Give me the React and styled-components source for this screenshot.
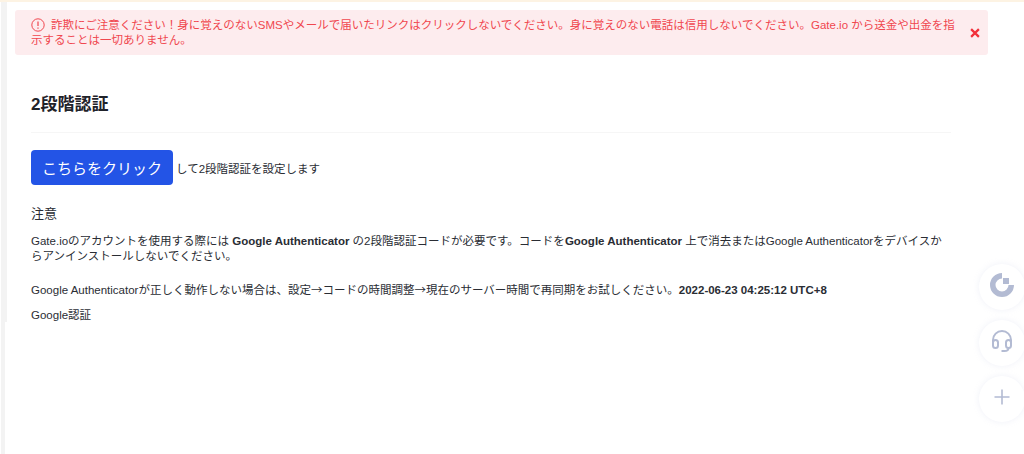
import React from "react";
import styled, { createGlobalStyle } from "styled-components";

const Global = createGlobalStyle`
  html, body { margin: 0; padding: 0; height: 100%; background: #fff; overflow: hidden; }
  body { font-family: "Liberation Sans", "Noto Sans CJK JP", sans-serif; color: #2a2d34; }
`;

const Page = styled.div`
  height: 454px;
  border-top: 2px solid #fdf3e3;
  box-sizing: border-box;
  position: relative;
`;
const Shell = styled.div`
  display: flex;
  height: 452px;
`;
const Rail = styled.div`
  width: 6px;
  margin-left: 1px;
  flex: none;
  display: flex;
  flex-direction: column;
`;
const RailTop = styled.div`
  height: 320px;
  background: #f3f3f3;
`;
const RailBottom = styled.div`
  flex: 1;
  width: 4px;
  background: #f3f3f3;
`;
const Main = styled.main`
  width: 981px;
  padding: 8px 0 0 8px;
  box-sizing: border-box;
`;
const Alert = styled.div`
  display: flex;
  justify-content: space-between;
  align-items: center;
  height: 45px;
  box-sizing: border-box;
  padding: 0 8px 0 16px;
  background: #fdecee;
  border-radius: 3px;
  color: #f0474f;
  font-size: 11.5px;
  line-height: 15px;
`;
const AlertText = styled.p`
  margin: 1px 0 0;
  width: 927px;
  svg { vertical-align: -3px; margin-right: 6px; }
`;
const Content = styled.section`
  padding: 0 37px 0 16px;
`;
const Title = styled.h1`
  margin: 0;
  height: 78px;
  box-sizing: border-box;
  padding-top: 38px;
  font-size: 17px;
  line-height: 24px;
  font-weight: 700;
  color: #1f2229;
  border-bottom: 1px solid #f6f6f6;
`;
const SetupRow = styled.div`
  display: flex;
  align-items: center;
  gap: 3px;
  margin-top: 17px;
  font-size: 11.5px;
`;
const Button = styled.button`
  width: 142px;
  height: 35px;
  padding: 0;
  border: 0;
  border-radius: 4px;
  background: #2354e6;
  color: #fff;
  font: inherit;
  font-size: 15px;
`;
const NoteTitle = styled.h2`
  margin: 20px 0 0;
  font-size: 13px;
  line-height: 18px;
  font-weight: 400;
`;
const Para = styled.p`
  margin: ${(p) => p.$mt}px 0 0;
  font-size: 11.5px;
  line-height: 15px;
  b { font-weight: 700; }
`;
const Arrow = styled.span`
  font-family: "Noto Sans CJK JP", sans-serif;
  line-height: 0;
`;
const Floats = styled.div`
  position: absolute;
  top: 262px;
  left: 979px;
  display: flex;
  flex-direction: column;
  gap: 10px;
`;
const Float = styled.div`
  width: 46px;
  height: 46px;
  box-sizing: border-box;
  padding-bottom: ${(p) => p.$lift}px;
  border-radius: 50%;
  background: #fff;
  box-shadow: 0 0 6px rgba(180, 190, 225, 0.22);
  display: flex;
  align-items: center;
  justify-content: center;
`;

const WarnIcon = () => (
  <svg width="14" height="14" viewBox="0 0 14 14" fill="none" stroke="#f0474f">
    <circle cx="7" cy="7" r="6.2" strokeWidth="1" />
    <path d="M7 3.5v4.5M7 9.6v1.2" strokeWidth="1.2" />
  </svg>
);

const CloseIcon = () => (
  <svg width="10" height="10" viewBox="0 0 9 9" stroke="#f2303a" strokeWidth="2" fill="none">
    <path d="M1 1l7 7M8 1l-7 7" />
  </svg>
);

export default function App() {
  return (
    <Page>
      <Global />
      <Shell>
        <Rail>
          <RailTop />
          <RailBottom />
        </Rail>
        <Main>
          <Alert>
            <AlertText>
              <WarnIcon />
              詐欺にご注意ください！身に覚えのないSMSやメールで届いたリンクはクリックしないでください。身に覚えのない電話は信用しないでください。Gate.io から送金や出金を指示することは一切ありません。
            </AlertText>
            <CloseIcon />
          </Alert>
          <Content>
            <Title>2段階認証</Title>
            <SetupRow>
              <Button>こちらをクリック</Button>
              <span>して2段階認証を設定します</span>
            </SetupRow>
            <NoteTitle>注意</NoteTitle>
            <Para $mt={11}>
              Gate.ioのアカウントを使用する際には <b>Google Authenticator</b> の2段階認証コードが必要です。コードを<b>Google Authenticator</b> 上で消去またはGoogle Authenticatorをデバイスからアンインストールしないでください。
            </Para>
            <Para $mt={19}>
              Google Authenticatorが正しく動作しない場合は、設定<Arrow>→</Arrow>コードの時間調整<Arrow>→</Arrow>現在のサーバー時間で再同期をお試しください。<b>2022-06-23 04:25:12 UTC+8</b>
            </Para>
            <Para $mt={10}>Google認証</Para>
          </Content>
        </Main>
      </Shell>
      <Floats>
        <Float $lift={4}>
          <svg width="24" height="24" viewBox="0 0 24 24" fill="#b3bbd3">
            <path d="M12 0A12 12 0 1 0 24 12H18.5A6.5 6.5 0 1 1 12 5.5Z" />
            <rect x="13" y="5" width="6" height="6" />
          </svg>
        </Float>
        <Float $lift={5}>
          <svg width="22" height="22" viewBox="0 0 22 22" fill="none" stroke="#b3bbd3" strokeWidth="2">
            <path d="M2 12V10a9 9 0 0 1 18 0v2" />
            <rect x="2" y="10" width="5" height="8" rx="2.5" />
            <rect x="15" y="10" width="5" height="8" rx="2.5" />
            <path d="M17.5 18c0 2-2 3-4 3h-3" />
          </svg>
        </Float>
        <Float $lift={4}>
          <svg width="16" height="16" viewBox="0 0 16 16" stroke="#b3bbd3" strokeWidth="1.6">
            <path d="M8 0.5v15M0.5 8h15" />
          </svg>
        </Float>
      </Floats>
    </Page>
  );
}
